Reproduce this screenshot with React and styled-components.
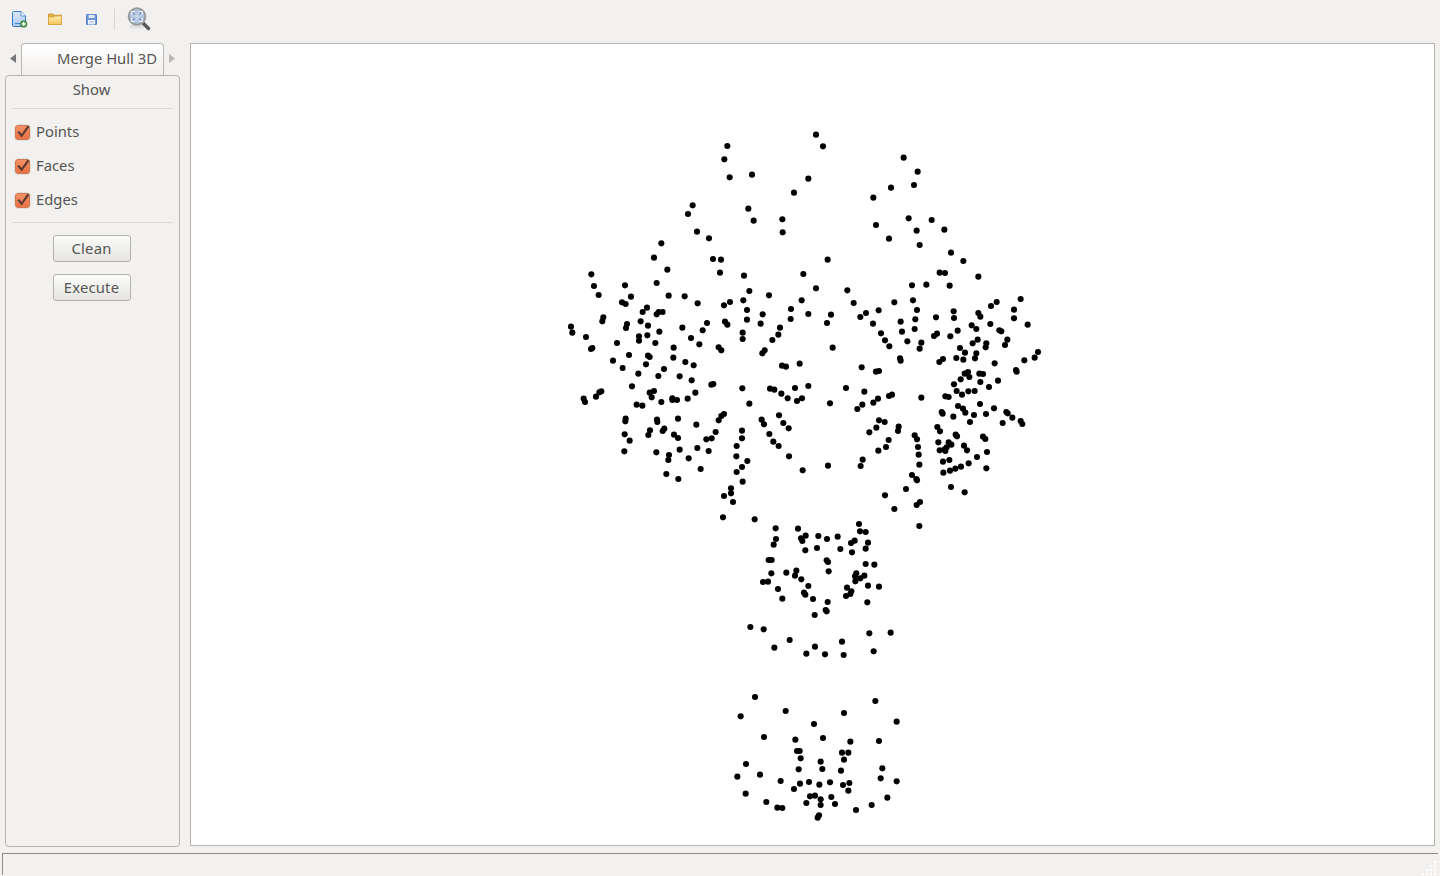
import React from "react";
import styled, { createGlobalStyle } from "styled-components";

const GlobalStyle = createGlobalStyle`
  html, body { margin: 0; padding: 0; background: #f2f1ef; }
  body { font-family: "Noto Sans", "Open Sans", sans-serif; }
`;

const Page = styled.div`
  display: flex;
  flex-direction: column;
  height: 876px;
  overflow: hidden;
  background: #f2f1ef;
  color: #555553;
  font-size: 14.8px;
`;
const Toolbar = styled.div`
  display: flex;
  align-items: center;
  flex: 0 0 38px;
  padding-left: 1px;
`;
const ToolButton = styled.div`
  display: flex;
  align-items: center;
  justify-content: center;
  width: 36px;
  height: 38px;
`;
const ToolSeparator = styled.div`
  width: 1px;
  height: 21px;
  margin: 0 12px 0 5px;
  background: #d8d6d2;
`;
const ZoomButton = styled.div`
  display: flex;
  align-items: center;
  width: 26px;
  height: 38px;
`;
const Main = styled.div`
  flex: 1;
  display: flex;
  gap: 10px;
  min-height: 0;
  padding: 5px 5px 0;
`;
const Sidebar = styled.div`
  display: flex;
  flex-direction: column;
  flex: 0 0 175px;
  height: 804px;
`;
const TabRow = styled.div`
  display: flex;
  flex: 0 0 31px;
`;
const TabArrow = styled.div`
  display: flex;
  align-items: center;
  justify-content: center;
  flex: 0 0 16px;
  height: 31px;
`;
const Tab = styled.div`
  position: relative;
  z-index: 1;
  box-sizing: border-box;
  flex: 0 0 143px;
  height: 32px;
  padding: 0 6px 3px 0;
  display: flex;
  align-items: center;
  justify-content: flex-end;
  border: 1px solid #b9b7b3;
  border-bottom: none;
  border-radius: 4px 4px 0 0;
  background: linear-gradient(#ffffff, #f2f1ef 90%);
  white-space: nowrap;
`;
const Panel = styled.div`
  flex: 1;
  box-sizing: border-box;
  border: 1px solid #b5b3ae;
  border-radius: 4px;
  padding: 0 6px;
`;
const Title = styled.div`
  display: flex;
  align-items: center;
  justify-content: center;
  height: 33px;
  padding: 0 2px 7px 0;
  box-sizing: border-box;
  border-bottom: 1px solid #dcdad6;
`;
const Checks = styled.div`
  display: flex;
  flex-direction: column;
  padding: 6px 0 5px 3px;
  border-bottom: 1px solid #dcdad6;
`;
const CheckRow = styled.label`
  display: flex;
  align-items: center;
  gap: 6px;
  height: 34px;
`;
const CheckText = styled.span`
  padding-bottom: 3px;
`;
const CheckBox = styled.span`
  box-sizing: border-box;
  display: flex;
  align-items: center;
  justify-content: center;
  width: 15px;
  height: 15px;
  border: 1px solid #d0794f;
  border-radius: 3px;
  background: linear-gradient(#f59068, #ea7142);
  box-shadow: 0 0 0 0.5px rgba(120, 110, 100, 0.25);
`;
const CheckSvg = styled.svg`
  overflow: visible;
  flex: none;
`;
const Buttons = styled.div`
  display: flex;
  flex-direction: column;
  align-items: center;
  gap: 12px;
  padding: 12px 2px 0 0;
`;
const Button = styled.button`
  box-sizing: border-box;
  width: 78px;
  height: 27px;
  padding: 0 0 2px;
  border: 1px solid #b3b1ac;
  border-radius: 3px;
  background: linear-gradient(#fbfbfa, #e6e5e2);
  color: #555553;
  font: inherit;
  letter-spacing: 0.2px;
`;
const Canvas = styled.div`
  flex: 1;
  box-sizing: border-box;
  height: 803px;
  border: 1px solid #b5b3ae;
  background: #ffffff;
`;
const Plot = styled.svg`
  display: block;
  width: 100%;
  height: 100%;
`;
const StatusBar = styled.div`
  position: relative;
  flex: 0 0 22px;
  box-sizing: border-box;
  margin: 0 2px 1px;
  border-top: 1px solid #8f8c88;
  border-left: 1px solid #8f8c88;
`;
const Grip = styled.svg`
  position: absolute;
  right: 0;
  bottom: 0;
`;

const regions = [
  [560, 120, [[502,78],[493,118],[509,172],[576,164],[745,176],[702,218],[398,256],[384,282],[565,266],[581,302],[667,298],[668,337],[411,335],[447,355],[304,370],[282,413],[322,449],[459,417],[483,419],[480,458],[552,467],[730,462],[94,463],[102,498],[116,525],[195,496],[213,530],[186,547],[197,552],[290,489],[326,527],[374,529],[413,550],[492,556],[510,546],[550,541],[568,513],[627,526],[725,541],[693,567],[561,570],[261,563]]],
  [560, 310, [[248,6],[296,6],[308,6],[290,13],[130,22],[127,34],[201,42],[198,54],[242,34],[264,47],[33,50],[37,68],[78,81],[97,114],[93,117],[171,99],[237,79],[237,92],[262,76],[298,65],[286,99],[367,53],[441,39],[428,61],[393,84],[418,103],[495,35],[502,44],[561,29],[608,13],[602,41],[692,27],[660,53],[655,74],[637,90],[745,12],[548,68],[548,87],[476,112],[484,121],[614,121],[607,130],[666,167],[678,170],[719,161],[341,113],[340,143],[207,135],[264,137],[269,141],[159,152],[188,174],[258,163],[312,177],[376,156],[401,166],[235,191],[295,198],[359,199],[395,211],[216,229],[454,224],[460,222],[547,235],[630,236],[643,239],[705,234],[745,228],[664,251],[683,265],[711,273],[726,265],[282,243],[269,248],[275,262],[337,265],[337,270],[351,270],[383,266],[406,248],[304,276],[124,244],[118,247],[108,260],[71,266],[75,276],[230,284],[247,287],[568,281],[492,312],[484,318],[476,331],[197,326],[196,334],[291,329],[292,336],[354,326],[409,344],[605,329],[612,343],[657,316],[670,339],[686,355],[546,362],[467,366],[270,361],[265,375],[313,356],[308,363],[194,373],[209,392],[342,374],[354,384],[439,388],[455,385],[546,385],[628,372],[640,395],[656,408],[530,408],[193,424],[289,427],[359,419],[412,414],[446,423],[327,435],[325,450],[386,445],[529,439],[687,439],[562,453],[546,471],[530,486],[422,477],[728,481],[319,492],[355,507],[548,515],[513,535],[513,550],[492,558],[519,576],[489,622],[584,628]]],
  [810, 120, [[18,44],[39,79],[281,113],[323,155],[312,195],[243,203],[190,233],[296,295],[365,300],[403,329],[320,332],[198,315],[237,356],[329,375],[423,398],[460,423],[53,419],[389,458],[405,459],[505,470],[18,505],[112,511],[306,496],[349,494],[419,497],[131,549],[253,547],[309,541],[632,537],[560,546],[543,558],[321,570],[206,571],[612,569]]],
  [810, 310, [[63,14],[51,39],[151,21],[168,9],[189,41],[272,35],[316,28],[314,57],[276,65],[378,22],[432,24],[431,4],[505,9],[511,20],[612,25],[213,70],[225,91],[238,109],[292,94],[334,98],[329,116],[381,71],[372,78],[421,79],[443,62],[485,46],[499,57],[541,42],[568,61],[574,64],[653,44],[68,113],[592,89],[585,105],[529,100],[527,112],[503,89],[488,100],[450,114],[465,128],[499,130],[495,145],[439,144],[460,149],[399,147],[388,156],[270,145],[272,152],[554,160],[643,151],[674,143],[684,126],[155,172],[198,185],[207,183],[618,180],[620,185],[474,186],[464,191],[508,191],[519,192],[478,201],[452,208],[432,223],[511,216],[564,212],[537,231],[440,243],[456,254],[475,244],[494,243],[108,234],[163,245],[60,280],[157,284],[142,297],[190,278],[204,266],[237,258],[246,254],[334,263],[406,259],[416,261],[444,288],[459,296],[466,308],[492,315],[510,282],[552,295],[528,312],[430,320],[395,306],[398,311],[480,336],[589,306],[593,310],[607,323],[578,339],[632,333],[637,342],[207,331],[224,336],[266,350],[264,363],[199,353],[178,367],[382,351],[390,364],[314,376],[321,388],[437,374],[441,379],[519,380],[526,387],[236,390],[228,411],[205,422],[324,411],[326,434],[328,464],[385,397],[416,397],[424,404],[462,407],[471,421],[389,421],[404,418],[410,412],[406,423],[531,426],[501,441],[399,455],[418,450],[476,460],[453,470],[436,476],[420,482],[400,488],[529,475],[158,449],[152,468],[54,467],[306,495],[319,507],[321,511],[288,537],[423,531],[464,547],[225,556],[253,597],[330,576],[320,585],[328,648]]],
  [730, 510, [[137,55],[204,56],[387,42],[390,64],[407,66],[227,77],[213,85],[217,93],[265,78],[291,87],[323,80],[138,87],[131,104],[374,92],[363,99],[414,98],[407,116],[226,121],[261,114],[331,117],[366,127],[116,150],[125,150],[290,151],[294,156],[407,162],[433,164],[296,184],[124,190],[169,188],[199,182],[195,197],[214,208],[379,190],[375,199],[403,197],[391,205],[376,214],[99,216],[114,215],[144,237],[235,228],[414,227],[447,230],[351,233],[364,244],[361,252],[348,258],[222,248],[226,254],[157,266],[249,267],[293,276],[412,277],[287,300],[290,304],[254,315],[61,351],[101,358],[418,370],[482,368],[179,390],[133,413],[255,410],[336,395],[229,431],[285,433],[341,435],[431,424]]],
  [725, 685, [[90,36],[451,48],[182,78],[47,94],[357,84],[515,110],[267,117],[117,156],[211,164],[294,159],[376,170],[462,168],[216,198],[224,198],[351,203],[370,203],[227,220],[287,230],[357,224],[63,237],[221,253],[292,252],[348,257],[472,250],[37,275],[105,269],[467,280],[167,288],[225,296],[252,291],[283,299],[315,292],[354,300],[373,294],[515,289],[207,312],[370,317],[62,326],[255,334],[270,332],[287,343],[319,336],[487,338],[124,351],[244,354],[287,360],[330,357],[440,360],[157,368],[172,369],[393,375],[282,391],[278,398]]],
];

const points = regions.flatMap(([ox, oy, list]) =>
  list.map(([x, y]) => [ox + x / 3, oy + y / 3])
);

const NewFileIcon = () => (
  <svg width="16" height="17" viewBox="0 0 16 17" style={{ marginLeft: 1 }}>
    <defs>
      <linearGradient id="docFill" x1="0" y1="0" x2="0" y2="1">
        <stop offset="0" stopColor="#dbe8f8" />
        <stop offset="1" stopColor="#a9c8ee" />
      </linearGradient>
    </defs>
    <path d="M0.5 1.5 a1 1 0 0 1 1-1 H9 L13.5 5 V14.5 a1 1 0 0 1-1 1 H1.5 a1 1 0 0 1-1-1 Z" fill="url(#docFill)" stroke="#3a78c9" />
    <path d="M9 .5 V5 H13.5" fill="#f2f7fd" stroke="#3a78c9" strokeWidth=".8" />
    <path d="M3 12.5 H8" stroke="#4a86d0" strokeWidth="1" />
    <circle cx="11.7" cy="13" r="3.3" fill="#4aa14a" stroke="#2f7a35" strokeWidth=".8" />
    <path d="M11.7 11 V15 M9.7 13 H13.7" stroke="#fff" strokeWidth="1.4" />
  </svg>
);

const FolderIcon = () => (
  <svg width="14" height="12" viewBox="0 0 14 12">
    <defs>
      <linearGradient id="folderFill" x1="0" y1="0" x2="0" y2="1">
        <stop offset="0" stopColor="#fdeeb4" />
        <stop offset="1" stopColor="#f4c55c" />
      </linearGradient>
    </defs>
    <path d="M.5 1 H5 L6 2.2 H13.5 V11.5 H.5 Z" fill="#e6b04c" stroke="#d39a33" />
    <path d="M.5 4 H6 L7 3 H13.5 V11.5 H.5 Z" fill="url(#folderFill)" stroke="#d9a23e" strokeWidth=".8" />
  </svg>
);

const SaveIcon = () => (
  <svg width="11" height="11" viewBox="0 0 11 11">
    <rect x=".5" y=".5" width="10" height="10" rx=".6" fill="#6f97d8" stroke="#4f7cc4" />
    <rect x="2.5" y=".8" width="6" height="3.2" fill="#dfe8f5" />
    <rect x="2" y="6" width="7" height="4.5" fill="#f4f6fa" />
    <path d="M3 7.5 H8 M3 9 H8" stroke="#a8bddd" strokeWidth=".7" />
  </svg>
);

const MagnifierIcon = () => (
  <svg width="24" height="24" viewBox="0 0 24 24">
    <defs>
      <radialGradient id="lensFill">
        <stop offset="0" stopColor="#c9d7ea" />
        <stop offset="1" stopColor="#a6bcd8" />
      </radialGradient>
      <linearGradient id="shadowFill" x1="0" y1="0" x2="0" y2="1">
        <stop offset="0" stopColor="#000" stopOpacity=".14" />
        <stop offset="1" stopColor="#000" stopOpacity="0" />
      </linearGradient>
    </defs>
    <ellipse cx="10" cy="20" rx="8" ry="3" fill="url(#shadowFill)" />
    <path d="M15.5 15.5 L21.5 21.5" stroke="#55585c" strokeWidth="3.4" strokeLinecap="round" />
    <circle cx="10" cy="9.5" r="8.3" fill="url(#lensFill)" stroke="#9a9d9f" strokeWidth="2" />
    <path d="M4.8 7.5 V4.6 H7.6 M12.4 4.6 H15.2 V7.5 M15.2 11.5 V14.4 H12.4 M7.6 14.4 H4.8 V11.5" fill="none" stroke="#f4f7fb" strokeWidth="1.4" />
    <path d="M5.6 5.4 L7.8 7.6 M14.4 5.4 L12.2 7.6 M14.4 13.6 L12.2 11.4 M5.6 13.6 L7.8 11.4" stroke="#5d83bb" strokeWidth="1.1" />
  </svg>
);

const Triangle = ({ dir, color }) => (
  <svg width="6" height="9" viewBox="0 0 6 9">
    <path d={dir === "left" ? "M6 0 V9 L0 4.5 Z" : "M0 0 V9 L6 4.5 Z"} fill={color} />
  </svg>
);

const CheckMark = () => (
  <CheckSvg width="13" height="13" viewBox="0 0 13 13">
    <path d="M2.2 5.6 L5.6 9.8 L12.6 .2" fill="none" stroke="#5b3b2f" strokeWidth="2.2" />
  </CheckSvg>
);

const GRIP = [[12,2],[12,6],[8,6],[12,10],[8,10],[4,10],[12,14],[8,14],[4,14],[0,14]];

export default function App() {
  return (
    <Page>
      <GlobalStyle />
      <Toolbar>
        <ToolButton><NewFileIcon /></ToolButton>
        <ToolButton><FolderIcon /></ToolButton>
        <ToolButton><SaveIcon /></ToolButton>
        <ToolSeparator />
        <ZoomButton><MagnifierIcon /></ZoomButton>
      </Toolbar>
      <Main>
        <Sidebar>
          <TabRow>
            <TabArrow><Triangle dir="left" color="#77767a" /></TabArrow>
            <Tab>Merge Hull 3D</Tab>
            <TabArrow><Triangle dir="right" color="#b9b7b3" /></TabArrow>
          </TabRow>
          <Panel>
            <Title>Show</Title>
            <Checks>
              {["Points", "Faces", "Edges"].map((label) => (
                <CheckRow key={label}>
                  <CheckBox><CheckMark /></CheckBox>
                  <CheckText>{label}</CheckText>
                </CheckRow>
              ))}
            </Checks>
            <Buttons>
              <Button>Clean</Button>
              <Button>Execute</Button>
            </Buttons>
          </Panel>
        </Sidebar>
        <Canvas>
          <Plot viewBox="191 44 1243 801">
            {points.map(([x, y], i) => (
              <circle key={i} cx={x} cy={y} r="3.05" fill="#000" />
            ))}
          </Plot>
        </Canvas>
      </Main>
      <StatusBar>
        <Grip width="16" height="16" viewBox="0 0 16 16">
          {GRIP.map(([x, y]) => (
            <rect key={`${x}-${y}`} x={x} y={y} width="2" height="2" fill="#fff" />
          ))}
        </Grip>
      </StatusBar>
    </Page>
  );
}
